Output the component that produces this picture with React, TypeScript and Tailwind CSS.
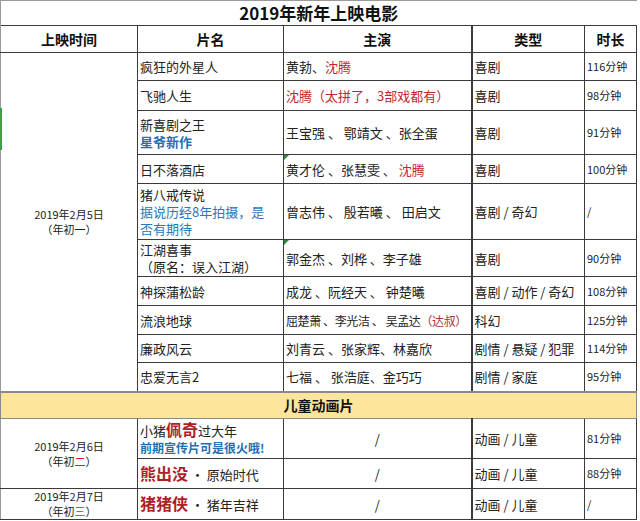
const font = { fontFamily: '"Noto Sans CJK SC", "Noto Sans", sans-serif' }

type Movie = {
  name: React.ReactNode
  cast: React.ReactNode
  genre: string
  len: string
  h: string
  mark?: boolean
}

const Red = ({ children }: { children: React.ReactNode }) => <span className="text-[#c0282e]">{children}</span>

const movies: Movie[] = [
  { name: '疯狂的外星人', cast: <>黄勃、<Red>沈腾</Red></>, genre: '喜剧', len: '116分钟', h: 'h-[28px]' },
  { name: '飞驰人生', cast: <Red>沈腾（太拼了，3部戏都有）</Red>, genre: '喜剧', len: '98分钟', h: 'h-[30px]' },
  {
    name: (
      <>
        <div>新喜剧之王</div>
        <div className="font-bold text-[#1f6fb5]">星爷新作</div>
      </>
    ),
    cast: '王宝强 、 鄂靖文 、张全蛋',
    genre: '喜剧',
    len: '91分钟',
    h: 'h-[44px]',
  },
  { name: '日不落酒店', cast: <>黄才伦 、张慧雯 、 <Red>沈腾</Red></>, genre: '喜剧', len: '100分钟', h: 'h-[29px]', mark: true },
  {
    name: (
      <>
        <div>猪八戒传说</div>
        <div className="text-[#2b77b8]">据说历经8年拍摄，是</div>
        <div className="text-[#2b77b8]">否有期待</div>
      </>
    ),
    cast: '曾志伟 、 殷若曦 、 田启文',
    genre: '喜剧 / 奇幻',
    len: '/',
    h: 'h-[56px]',
  },
  {
    name: (
      <>
        <div>江湖喜事</div>
        <div>（原名：误入江湖）</div>
      </>
    ),
    cast: '郭金杰 、刘桦 、李子雄',
    genre: '喜剧',
    len: '90分钟',
    h: 'h-[37px]',
    mark: true,
  },
  { name: '神探蒲松龄', cast: '成龙 、阮经天 、 钟楚曦', genre: '喜剧 / 动作 / 奇幻', len: '108分钟', h: 'h-[29px]' },
  {
    name: '流浪地球',
    cast: (
      <span className="text-[12px] tracking-[-0.4px]">
        屈楚萧 、李光洁 、 吴孟达<span className="text-[#a8333a]">（达叔）</span>
      </span>
    ),
    genre: '科幻',
    len: '125分钟',
    h: 'h-[29px]',
  },
  { name: '廉政风云', cast: '刘青云 、张家辉、林嘉欣', genre: '剧情 / 悬疑 / 犯罪', len: '114分钟', h: 'h-[28px]' },
  { name: '忠爱无言2', cast: '七福 、 张浩庭、金巧巧', genre: '剧情 / 家庭', len: '95分钟', h: 'h-[29px]' },
]

const cell = 'border border-[#3a3a3a] px-[2px] py-0 align-middle whitespace-nowrap'
const lastRow = 'border-b-2 border-b-[#8a8a8a]'

function Mark() {
  return (
    <span className="absolute left-0 top-0 h-0 w-0 border-r-[5px] border-t-[5px] border-r-transparent border-t-[#2e8b3a]" />
  )
}

export default function App() {
  return (
    <div className="relative h-[521px] w-[640px] overflow-hidden bg-white text-[13px] leading-[17px] text-[#222]" style={font}>
      <div className="absolute left-0 top-[108px] h-[42px] w-[2px] bg-[#3aa04a]" />
      <table className="w-[636px] table-fixed border-collapse">
        <colgroup>
          <col className="w-[137px]" />
          <col className="w-[146px]" />
          <col className="w-[188px]" />
          <col className="w-[113px]" />
          <col className="w-[52px]" />
        </colgroup>
        <tbody>
          <tr className="h-[25px]">
            <td colSpan={5} className="border-l border-t border-[#9a9a9a] p-0 text-center text-[17px] font-bold leading-[20px] text-[#111]">
              2019年新年上映电影
            </td>
          </tr>
          <tr className="h-[27px] text-[14px] font-bold text-[#111]">
            <td className={`${cell} border-l-[#9a9a9a] text-center`}>上映时间</td>
            <td className={`${cell} text-center`}>片名</td>
            <td className={`${cell} border-r-2 text-center`}>主演</td>
            <td className={`${cell} text-center`}>类型</td>
            <td className={`${cell} text-center`}>时长</td>
          </tr>
          {movies.map((m, i) => (
            <tr key={i} className={m.h}>
              {i === 0 && (
                <td rowSpan={10} className={`${cell} border-l-[#9a9a9a] ${lastRow} text-center text-[11px] leading-[15px]`}>
                  <div>2019年2月5日</div>
                  <div>（年初一）</div>
                </td>
              )}
              <td className={`${cell} ${i === 9 ? lastRow : ''}`}>{m.name}</td>
              <td className={`${cell} relative border-r-2 ${i === 9 ? lastRow : ''}`}>
                {m.mark && <Mark />}
                {m.cast}
              </td>
              <td className={`${cell} ${i === 9 ? lastRow : ''}`}>{m.genre}</td>
              <td className={`${cell} text-[11px] ${i === 9 ? lastRow : ''}`}>{m.len}</td>
            </tr>
          ))}
          <tr className="h-[27px]">
            <td colSpan={5} className="border border-[#8a8a8a] bg-[#fde59c] p-0 text-center text-[14px] font-bold text-[#111]">
              儿童动画片
            </td>
          </tr>
          <tr className="h-[40px]">
            <td rowSpan={2} className={`${cell} border-l-[#9a9a9a] text-center text-[11px] leading-[15px]`}>
              <div>2019年2月6日</div>
              <div>（年初<span className="text-[#c0282e]">二</span>）</div>
            </td>
            <td className={cell}>
              <div className="h-[18px] leading-[18px]">
                小猪<span className="text-[16px] font-bold leading-none text-[#b01e24]">佩奇</span>过大年
              </div>
              <div className="text-[12px] font-bold leading-[17px] text-[#1f6fb5]">前期宣传片可是很火哦!</div>
            </td>
            <td className={`${cell} border-r-2 text-center`}>/</td>
            <td className={cell}>动画 / 儿童</td>
            <td className={`${cell} text-[11px]`}>81分钟</td>
          </tr>
          <tr className="h-[30px]">
            <td className={cell}>
              <span className="text-[16px] font-bold leading-none text-[#b01e24]">熊出没</span> · 原始时代
            </td>
            <td className={`${cell} border-r-2 text-center`}>/</td>
            <td className={cell}>动画 / 儿童</td>
            <td className={`${cell} text-[11px]`}>88分钟</td>
          </tr>
          <tr className="h-[31px]">
            <td className={`${cell} border-l-[#9a9a9a] text-center text-[11px] leading-[15px]`}>
              <div>2019年2月7日</div>
              <div>（年初<span className="text-[#c0282e]">三</span>）</div>
            </td>
            <td className={cell}>
              <span className="text-[16px] font-bold leading-none text-[#b01e24]">猪猪侠</span> · 猪年吉祥
            </td>
            <td className={`${cell} border-r-2 text-center`}>/</td>
            <td className={cell}>动画 / 儿童</td>
            <td className={`${cell} text-[11px]`}>/</td>
          </tr>
        </tbody>
      </table>
    </div>
  )
}
